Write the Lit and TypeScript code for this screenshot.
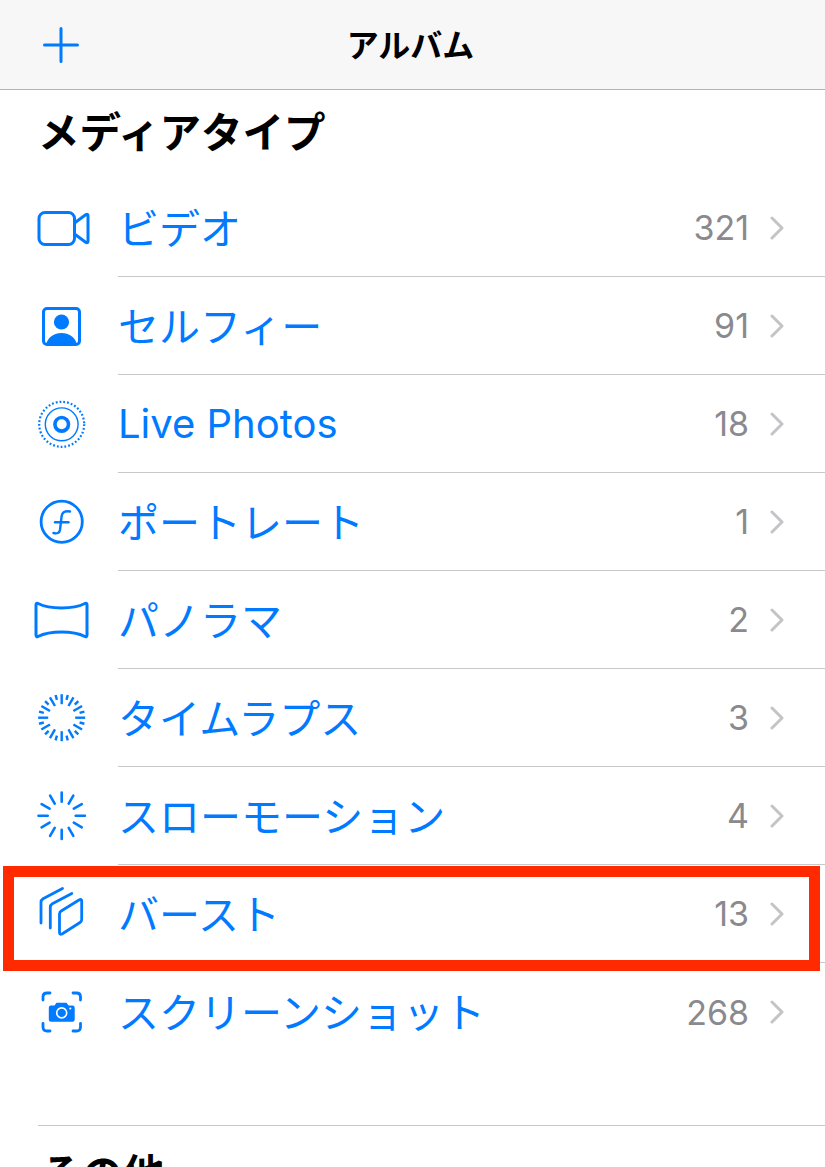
import { LitElement, html, css, svg } from "lit";
import { customElement } from "lit/decorators.js";

const ticks = (n: number, r1: (i: number) => number, r2: number) => {
  const out = [];
  for (let i = 0; i < n; i++) {
    const a = (i * 2 * Math.PI) / n;
    const s = Math.sin(a), c = Math.cos(a);
    out.push(svg`<line x1=${61.7 + s * r1(i)} y1=${49.7 - c * r1(i)} x2=${61.7 + s * r2} y2=${49.7 - c * r2} />`);
  }
  return out;
};

const icons: Record<string, unknown> = {
  video: svg`<g fill="none" stroke-width="3" stroke-linejoin="round">
    <rect x="39" y="34.5" width="35.5" height="32" rx="6" />
    <path d="M74.5 45 L86 36.5 Q88 35.5 88 38 V63 Q88 65.5 86 64.5 L74.5 56" /></g>`,
  selfie: svg`<rect x="43.5" y="32.5" width="36" height="36" rx="3.5" fill="none" stroke-width="3" />
    <circle cx="61.5" cy="46" r="7.6" fill="currentColor" stroke="none" />
    <path d="M46 68.5 C48 61 54 57 61.5 57 C69 57 75 61 77 68.5 Z" fill="currentColor" stroke="none" />`,
  live: svg`<g fill="none">
    <circle cx="61.7" cy="50.3" r="22.5" stroke-width="2.2" stroke-dasharray="1.8 2.02" />
    <circle cx="61.7" cy="50.3" r="16.4" stroke-width="1.4" />
    <circle cx="61.7" cy="50.3" r="6.8" stroke-width="3.6" /></g>`,
  portrait: svg`<g fill="none">
    <circle cx="61.7" cy="49.7" r="20.6" stroke-width="2.8" />
    <path d="M70 39.5 C65 38.5 62 40 61.5 45 L60 58 C59.5 61 57 62 53.5 61" stroke-width="2.4" stroke-linecap="round" />
    <path d="M55 50.3 H68.5" stroke-width="2.4" stroke-linecap="round" /></g>`,
  pano: svg`<path d="M38 33.5 C50 39.5 73 39.5 85 33.5 Q87 32.8 87 35 V65 Q87 67.2 85 66.5 C73 60.5 50 60.5 38 66.5 Q36 67.2 36 65 V35 Q36 32.8 38 33.5 Z" fill="none" stroke-width="3" stroke-linejoin="round" />`,
  timelapse: svg`<g stroke-width="2.4" fill="none">${ticks(24, (i) => (i % 2 ? 18.5 : 13.5), 23.5)}</g>`,
  slomo: svg`<g stroke-width="2.6" stroke-linecap="round" fill="none">${ticks(12, () => 14, 23.2)}</g>`,
  burst: svg`<g fill="none" stroke-width="2.8" stroke-linecap="round" stroke-linejoin="round">
    <path d="M41 59 V38.5 Q41 36 43 34.8 L62.5 24.5" />
    <path d="M50.3 64 V43.5 Q50.3 41 52.3 39.8 L71.8 29.5" />
    <path d="M59.5 50 Q59.5 48 61.2 47 L79 36 Q81.7 34.6 81.7 37 V55.5 Q81.7 57.5 80 58.5 L62 70 Q59.5 71 59.5 68.5 Z" /></g>`,
  shot: svg`<g fill="none" stroke-width="2.8" stroke-linecap="round">
    <path d="M43 38 V35 Q43 31 47 31 H50" /><path d="M73 31 H76.5 Q80.5 31 80.5 35 V38" />
    <path d="M43 61.5 V65 Q43 69 47 69 H50" /><path d="M73 69 H76.5 Q80.5 69 80.5 65 V61.5" /></g>
    <path d="M51 43.5 H54.5 L56.5 40.8 H66.5 L68.5 43.5 H72.5 Q74.7 43.5 74.7 45.7 V57.5 Q74.7 59.7 72.5 59.7 H51 Q48.8 59.7 48.8 57.5 V45.7 Q48.8 43.5 51 43.5 Z" fill="currentColor" stroke="none" />
    <circle cx="61.7" cy="50.9" r="5" fill="none" style="stroke:#fff" stroke-width="1.6" />
    <circle cx="70.3" cy="46.5" r="1.1" style="fill:#fff" stroke="none" />`,
};

const rows = [
  ["video", "ビデオ", "321"],
  ["selfie", "セルフィー", "91"],
  ["live", "Live Photos", "18"],
  ["portrait", "ポートレート", "1"],
  ["pano", "パノラマ", "2"],
  ["timelapse", "タイムラプス", "3"],
  ["slomo", "スローモーション", "4"],
  ["burst", "バースト", "13"],
  ["shot", "スクリーンショット", "268"],
];

@customElement("app-root")
export class AppRoot extends LitElement {
  static styles = css`
    :host {
      display: block;
      position: relative;
      width: 825px;
      height: 1167px;
      overflow: hidden;
      background: #fff;
      font-family: Inter, "Noto Sans CJK JP", sans-serif;
    }
    .nav {
      height: 89px;
      background: #f7f7f7;
      border-bottom: 1px solid #b2b2b2;
      display: grid;
      grid-template-columns: 1fr auto 1fr;
      align-items: center;
    }
    .plus {
      display: block;
      margin-left: 43px;
      color: #007aff;
    }
    .title {
      font-size: 32px;
      font-weight: 700;
      color: #000;
      margin: 0 4px 4px 0;
      font-family: "Noto Sans CJK JP", sans-serif;
    }
    .heading {
      height: 89px;
      box-sizing: border-box;
      padding: 10px 0 0 38px;
      font-size: 41.5px;
      line-height: 60px;
      font-weight: 700;
      color: #000;
      font-family: "Noto Sans CJK JP", sans-serif;
    }
    .row {
      height: 98px;
      display: flex;
      color: #007aff;
    }
    .icon {
      flex: none;
      display: block;
      width: 118px;
      height: 98px;
      stroke: currentColor;
    }
    .body {
      flex: 1;
      display: flex;
      align-items: center;
      border-bottom: 1px solid #c8c8ca;
      padding: 0 41px 0 0;
    }
    .row.last .body {
      border-bottom: none;
    }
    .label {
      flex: 1;
      font-size: 41px;
      margin-bottom: 4px;
      font-family: "Noto Sans CJK JP", sans-serif;
    }
    .label.latin {
      font-family: Inter, sans-serif;
      font-size: 40px;
      margin-bottom: 0;
    }
    .count {
      font-size: 34px;
      color: #8a8a8e;
      margin-right: 21px;
    }
    .chev {
      display: block;
      flex: none;
    }
    .section2 {
      margin: 64px 0 0 38px;
      border-top: 1px solid #c8c8ca;
    }
    .section2 .heading {
      padding: 16px 0 0 2px;
    }
    .mark {
      position: absolute;
      left: 3px;
      top: 866px;
      width: 817px;
      height: 105px;
      box-sizing: border-box;
      border: 11px solid #ff2a00;
    }
  `;

  render() {
    return html`
      <div class="nav">
        <svg class="plus" width="36" height="36" viewBox="0 0 36 36" fill="none" stroke="currentColor" stroke-width="3" stroke-linecap="round">
          <path d="M18 1.5 V34.5 M1.5 18 H34.5" />
        </svg>
        <div class="title">アルバム</div>
        <div></div>
      </div>
      <div class="heading">メディアタイプ</div>
      ${rows.map(
        ([icon, label, count], i) => html`
          <div class="row ${i === rows.length - 1 ? "last" : ""}">
            <svg class="icon" viewBox="0 1 118 98">${icons[icon]}</svg>
            <div class="body">
              <div class="label ${icon === "live" ? "latin" : ""}">${label}</div>
              <div class="count">${count}</div>
              <svg class="chev" width="14" height="24" viewBox="0 0 14 24" fill="none" stroke="#c4c4c7" stroke-width="3" stroke-linecap="round" stroke-linejoin="round">
                <path d="M2 2 L12 12 L2 22" />
              </svg>
            </div>
          </div>
        `
      )}
      <div class="section2"><div class="heading">その他</div></div>
      <div class="mark"></div>
    `;
  }
}
